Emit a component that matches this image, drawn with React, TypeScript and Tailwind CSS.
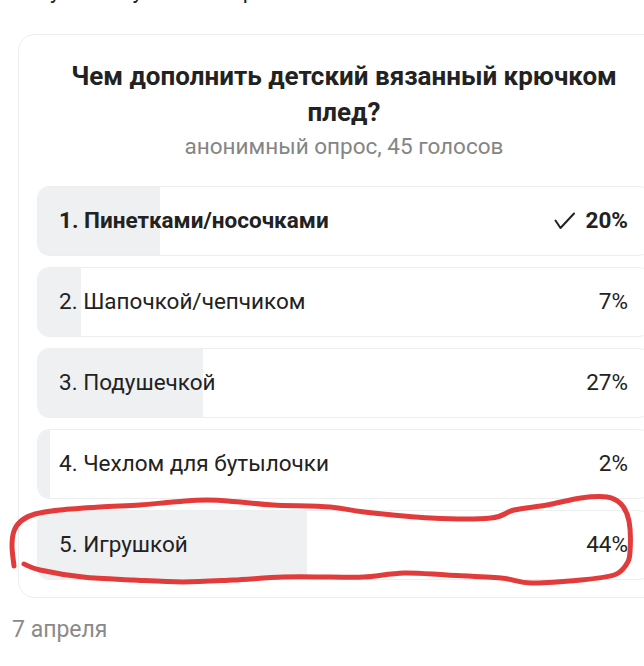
import React from "react";

const options = [
  { label: "1. Пинетками/носочками", pct: 20, chosen: true },
  { label: "2. Шапочкой/чепчиком", pct: 7 },
  { label: "3. Подушечкой", pct: 27 },
  { label: "4. Чехлом для бутылочки", pct: 2 },
  { label: "5. Игрушкой", pct: 44 },
];

const pts: [number, number][] = [
  [14, 566], [12, 546], [14, 531], [21, 521], [35, 514], [60, 510], [100, 507], [140, 505],
  [173, 502], [207, 500], [240, 502], [273, 505], [330, 507], [364, 512], [431, 518],
  [491, 518], [514, 510], [547, 505], [581, 498], [607, 497], [621, 504], [629, 521],
  [630, 552], [626, 565], [614, 575], [581, 580], [531, 583], [501, 578], [447, 575],
  [404, 573], [364, 577], [330, 577], [283, 577], [233, 580], [183, 582], [133, 580],
  [83, 577], [40, 570], [24, 564],
];

function smoothPath(p: [number, number][]) {
  let d = `M ${p[0][0]} ${p[0][1]}`;
  for (let i = 0; i < p.length - 1; i++) {
    const p0 = p[i - 1] || p[i];
    const p1 = p[i];
    const p2 = p[i + 1];
    const p3 = p[i + 2] || p2;
    const c1x = p1[0] + (p2[0] - p0[0]) / 6;
    const c1y = p1[1] + (p2[1] - p0[1]) / 6;
    const c2x = p2[0] - (p3[0] - p1[0]) / 6;
    const c2y = p2[1] - (p3[1] - p1[1]) / 6;
    d += ` C ${c1x} ${c1y} ${c2x} ${c2y} ${p2[0]} ${p2[1]}`;
  }
  return d;
}

export default function App() {
  return (
    <div
      className="relative w-[644px] h-[666px] overflow-hidden bg-white text-[#222222]"
      style={{ fontFamily: "Roboto, 'Noto Sans', sans-serif" }}
    >
      <div className="h-[4px] overflow-hidden">
        <div className="flex -mt-[19px] text-[22px] leading-[20px] text-[#222222]">
          <span className="w-[50px]" />
          <span>у</span>
          <span className="w-[72px]" />
          <span>у</span>
          <span className="w-[100px]" />
          <span>р</span>
        </div>
      </div>

      <div className="ml-[18px] mt-[30px] w-[652px] rounded-[16px] border border-[#eceef0] px-[18px] pt-[23px] pb-[17px]">
        <div className="text-center text-[26px] font-bold leading-[36px] text-[#222222] px-[10px]">
          Чем дополнить детский вязанный крючком плед?
        </div>
        <div className="mt-[2px] text-center text-[22.5px] leading-[28px] text-[#858585]">
          анонимный опрос, 45 голосов
        </div>

        <div className="mt-[26px] flex flex-col gap-[11px]">
          {options.map((o) => (
            <div
              key={o.label}
              className="relative h-[70px] overflow-hidden rounded-[12px] border border-[#eceef0] bg-white"
            >
              <div
                className="absolute inset-y-0 left-0 bg-[#eef0f2]"
                style={{ width: `${o.pct}%` }}
              />
              <div className="relative flex h-full items-center justify-between pl-[21px] pr-[22px] text-[22.5px]">
                <span className={o.chosen ? "font-bold" : ""}>{o.label}</span>
                <span className={`flex items-center ${o.chosen ? "font-bold" : ""}`}>
                  {o.chosen && (
                    <svg width="22" height="18" viewBox="0 0 22 18" className="mr-[10px]">
                      <polyline
                        points="1.5,8.5 6.5,16 20,1.5"
                        fill="none"
                        stroke="#222222"
                        strokeWidth="2"
                        strokeLinecap="round"
                        strokeLinejoin="round"
                      />
                    </svg>
                  )}
                  {o.pct}%
                </span>
              </div>
            </div>
          ))}
        </div>
      </div>

      <div className="ml-[12px] mt-[18px] text-[23px] leading-[28px] text-[#8a8a8a]">7 апреля</div>

      <svg
        className="pointer-events-none absolute left-0 top-0"
        width="644"
        height="666"
        viewBox="0 0 644 666"
      >
        <path
          d={smoothPath(pts)}
          fill="none"
          stroke="#e23b3b"
          strokeWidth="5"
          strokeLinecap="round"
          strokeLinejoin="round"
        />
      </svg>
    </div>
  );
}
